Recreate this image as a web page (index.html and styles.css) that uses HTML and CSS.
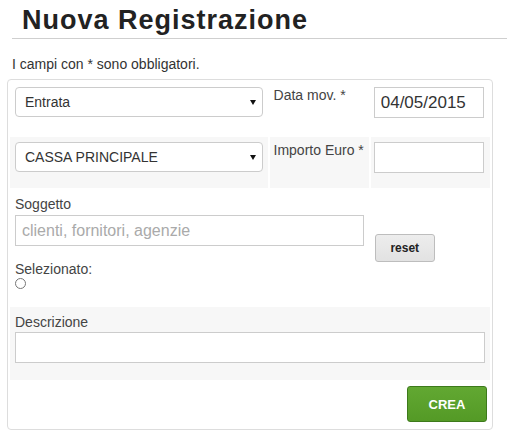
FILE: index.html
```html
<!DOCTYPE html>
<html lang="it">
<head>
<meta charset="utf-8">
<title>Nuova Registrazione</title>
<link rel="stylesheet" href="styles.css">
</head>
<body>
<div class="header">
  <h1 class="title">Nuova Registrazione</h1>
</div>
<p class="note">I campi con * sono obbligatori.</p>
<div class="panel">
  <table class="grid">
    <colgroup>
      <col class="c1"><col class="c2"><col class="c3">
    </colgroup>
    <tr class="first">
      <td>
        <div class="select"><span>Entrata</span><svg class="caret" width="6" height="5" viewBox="0 0 6 5"><path d="M0 0H6L3 5Z" fill="#111"/></svg></div>
      </td>
      <td class="lbl">Data mov. *</td>
      <td><input class="field date" type="text" value="04/05/2015"></td>
    </tr>
    <tr class="alt">
      <td>
        <div class="select"><span>CASSA PRINCIPALE</span><svg class="caret" width="6" height="5" viewBox="0 0 6 5"><path d="M0 0H6L3 5Z" fill="#111"/></svg></div>
      </td>
      <td class="lbl">Importo Euro *</td>
      <td><input class="field date" type="text" value=""></td>
    </tr>
    <tr class="subject">
      <td colspan="2">
        <div class="flabel">Soggetto</div>
        <input class="field wide gap" type="text" placeholder="clienti, fornitori, agenzie">
        <div class="flabel">Selezionato:</div>
        <input class="radio" type="radio">
      </td>
      <td class="mid"><button class="btn-reset" type="button">reset</button></td>
    </tr>
    <tr class="alt desc">
      <td colspan="3">
        <div class="flabel">Descrizione</div>
        <input class="field wide" type="text">
      </td>
    </tr>
    <tr>
      <td colspan="3" class="actions"><button class="btn-crea" type="button">CREA</button></td>
    </tr>
  </table>
</div>
</body>
</html>
```
FILE: styles.css
```css
* { box-sizing: border-box; }
body {
  margin: 0;
  font-family: "Liberation Sans", Arial, sans-serif;
  color: #333;
  background: #fff;
}
.header {
  margin-left: 12px;
  border-bottom: 1px solid #cfcfcf;
  padding-left: 10px;
  height: 39px;
}
.title {
  margin: 0;
  padding-top: 5px;
  font-size: 27px;
  line-height: 30px;
  font-weight: bold;
  color: #222;
  letter-spacing: 1px;
}
.note {
  margin: 16px 0 0 12px;
  font-size: 14px;
  line-height: 18px;
  color: #333;
}
.panel {
  margin: 6px 0 0 7px;
  width: 486px;
  border: 1px solid #ddd;
  border-radius: 4px;
}
.grid {
  width: 100%;
  border-collapse: separate;
  border-spacing: 2px;
  table-layout: fixed;
}
.c1 { width: 257px; }
.c2 { width: 99px; }
.c3 { width: 119px; }
.grid td {
  padding: 5px;
  vertical-align: top;
}
.grid tr.first td { padding-bottom: 7px; }
.grid tr.alt td { background: #f7f7f7; }
.grid td.lbl {
  padding: 4px 0 5px 4px;
  font-size: 14px;
  line-height: 18px;
  color: #444;
  white-space: nowrap;
}
.grid tr.first td.lbl { padding-bottom: 7px; }
.grid td.mid { vertical-align: middle; padding-left: 4px; }
.grid tr.subject td { padding-top: 4px; }
.grid tr.subject td.mid { padding-top: 5px; }
.grid tr.desc td { padding-bottom: 7px; }
.select {
  display: flex;
  align-items: center;
  justify-content: space-between;
  height: 30px;
  padding: 0 6px 0 9px;
  border: 1px solid #ccc;
  border-radius: 4px;
  background: #fff;
  font-size: 14px;
  color: #333;
  margin-bottom: 10px;
}
.caret { display: block; }
.field {
  display: block;
  height: 31px;
  border: 1px solid #ccc;
  border-radius: 0;
  padding: 0 6px;
  font-family: "Liberation Sans", Arial, sans-serif;
  font-size: 16px;
  color: #333;
  background: #fff;
  margin: 0 0 10px 0;
  outline: none;
}
.field.date { width: 110px; margin-left: -2px; font-size: 17px; }
.field.wide { width: 100%; }
.field.gap { margin-bottom: 13px; }
.field::placeholder { color: #aaa; }
.flabel {
  font-size: 14px;
  line-height: 20px;
  color: #444;
}
.subject .flabel:first-child { line-height: 21px; }
.radio {
  display: block;
  margin: -1px 0 11px 0;
  width: 11px;
  height: 11px;
}
.btn-reset {
  width: 60px;
  height: 28px;
  border: 1px solid #bdbdbd;
  border-radius: 3px;
  background: linear-gradient(#ededed, #e2e2e2);
  font-family: "Liberation Sans", Arial, sans-serif;
  font-weight: bold;
  font-size: 12px;
  color: #222;
  padding: 0;
}
.grid td.actions {
  text-align: right;
  padding: 4px 3px 5px 5px;
}
.btn-crea {
  width: 80px;
  height: 36px;
  border: 1px solid #3d7a1b;
  border-radius: 3px;
  background: linear-gradient(#62a832, #549a26);
  color: #fff;
  font-family: "Liberation Sans", Arial, sans-serif;
  font-weight: bold;
  font-size: 13px;
  padding: 0;
}
```
